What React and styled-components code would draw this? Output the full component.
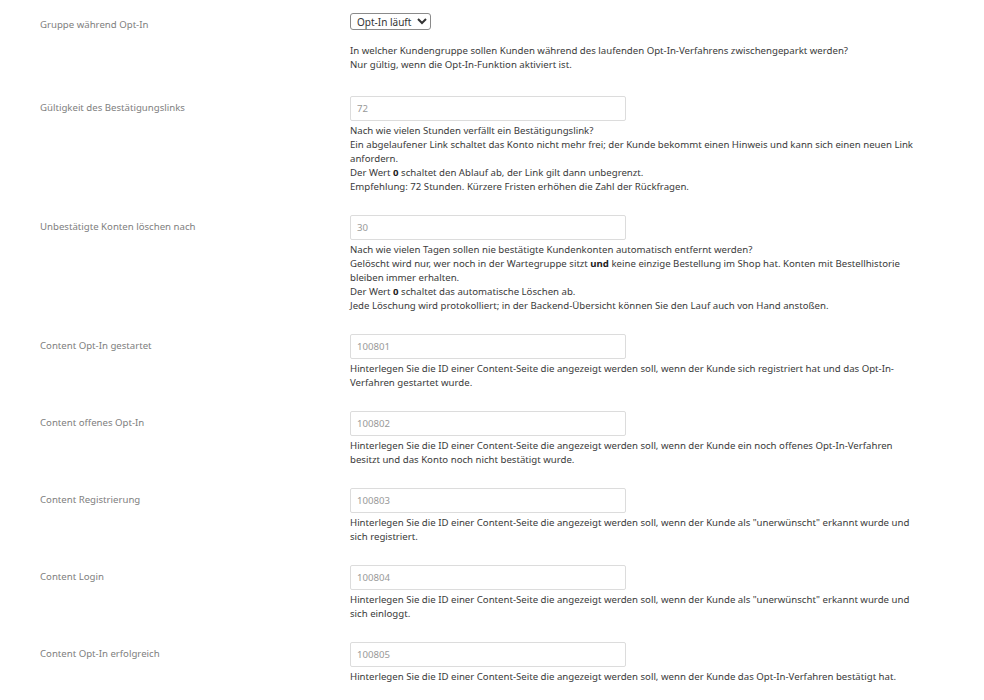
import React from 'react'
import styled, { createGlobalStyle } from 'styled-components'

const GlobalStyle = createGlobalStyle`
  html, body {
    margin: 0;
    padding: 0;
    background: #fff;
  }

  body {
    font-family: "Noto Sans", "Open Sans", sans-serif;
    -webkit-font-smoothing: antialiased;
  }
`

const CONTENT_ROWS = [
  {
    label: 'Content Opt-In gestartet',
    value: '100801',
    text: 'Hinterlegen Sie die ID einer Content-Seite die angezeigt werden soll, wenn der Kunde sich registriert hat und das Opt-In-Verfahren gestartet wurde.',
  },
  {
    label: 'Content offenes Opt-In',
    value: '100802',
    text: 'Hinterlegen Sie die ID einer Content-Seite die angezeigt werden soll, wenn der Kunde ein noch offenes Opt-In-Verfahren besitzt und das Konto noch nicht bestätigt wurde.',
  },
  {
    label: 'Content Registrierung',
    value: '100803',
    text: 'Hinterlegen Sie die ID einer Content-Seite die angezeigt werden soll, wenn der Kunde als "unerwünscht" erkannt wurde und sich registriert.',
  },
  {
    label: 'Content Login',
    value: '100804',
    text: 'Hinterlegen Sie die ID einer Content-Seite die angezeigt werden soll, wenn der Kunde als "unerwünscht" erkannt wurde und sich einloggt.',
  },
  {
    label: 'Content Opt-In erfolgreich',
    value: '100805',
    text: 'Hinterlegen Sie die ID einer Content-Seite die angezeigt werden soll, wenn der Kunde das Opt-In-Verfahren bestätigt hat.',
  },
]

const App = () => {
  return (
    <>
      <GlobalStyle />
      <Form>
        <Row>
          <Label>Gruppe während Opt-In</Label>
          <Field>
            <Select defaultValue="running">
              <option value="running">Opt-In läuft</option>
            </Select>
            <Description $spaced>
              In welcher Kundengruppe sollen Kunden während des laufenden Opt-In-Verfahrens zwischengeparkt werden?
              <br />
              Nur gültig, wenn die Opt-In-Funktion aktiviert ist.
            </Description>
          </Field>
        </Row>

        <Row>
          <Label>Gültigkeit des Bestätigungslinks</Label>
          <Field>
            <Input defaultValue="72" />
            <Description>
              Nach wie vielen Stunden verfällt ein Bestätigungslink?
              <br />
              Ein abgelaufener Link schaltet das Konto nicht mehr frei; der Kunde bekommt einen Hinweis und kann sich einen neuen Link anfordern.
              <br />
              Der Wert <b>0</b> schaltet den Ablauf ab, der Link gilt dann unbegrenzt.
              <br />
              Empfehlung: 72 Stunden. Kürzere Fristen erhöhen die Zahl der Rückfragen.
            </Description>
          </Field>
        </Row>

        <Row>
          <Label>Unbestätigte Konten löschen nach</Label>
          <Field>
            <Input defaultValue="30" />
            <Description>
              Nach wie vielen Tagen sollen nie bestätigte Kundenkonten automatisch entfernt werden?
              <br />
              Gelöscht wird nur, wer noch in der Wartegruppe sitzt <b>und</b> keine einzige Bestellung im Shop hat. Konten mit Bestellhistorie bleiben immer erhalten.
              <br />
              Der Wert <b>0</b> schaltet das automatische Löschen ab.
              <br />
              Jede Löschung wird protokolliert; in der Backend-Übersicht können Sie den Lauf auch von Hand anstoßen.
            </Description>
          </Field>
        </Row>

        {CONTENT_ROWS.map(row => (
          <Row key={row.value}>
            <Label>{row.label}</Label>
            <Field>
              <Input defaultValue={row.value} />
              <Description>{row.text}</Description>
            </Field>
          </Row>
        ))}
      </Form>
    </>
  )
}

export default App

const Form = styled.div`
  display: flex;
  flex-direction: column;
  gap: 21px;

  padding: 13px 0 24px 40px;
`

const Row = styled.div`
  display: grid;
  grid-template-columns: 310px 570px;
  align-items: start;
`

const Label = styled.div`
  padding-top: 5px;

  color: #808080;
  font-size: 9.65px;
  line-height: 14px;
`

const Field = styled.div`
  display: flex;
  flex-direction: column;
  align-items: flex-start;
`

const Select = styled.select`
  height: 17px;
  padding: 0 2px;
  border: 1px solid #8a8a8a;
  border-radius: 3px;
  background: #fff;

  color: #333;
  font-family: "Noto Sans", sans-serif;
  font-size: 10px;
`

const Input = styled.input`
  box-sizing: border-box;
  width: 276px;
  height: 25px;
  padding: 0 6px;
  border: 1px solid #dcdcdc;
  border-radius: 2px;
  outline: none;

  color: #999;
  font-family: "Noto Sans", sans-serif;
  font-size: 9.65px;
`

const Description = styled.div`
  margin-top: ${props => (props.$spaced ? '14px' : '3px')};
  margin-bottom: ${props => (props.$spaced ? '3px' : '0')};

  color: #3a3a3a;
  font-size: 9.65px;
  line-height: 14px;

  b {
    font-weight: 700;
    color: #222;
  }
`
